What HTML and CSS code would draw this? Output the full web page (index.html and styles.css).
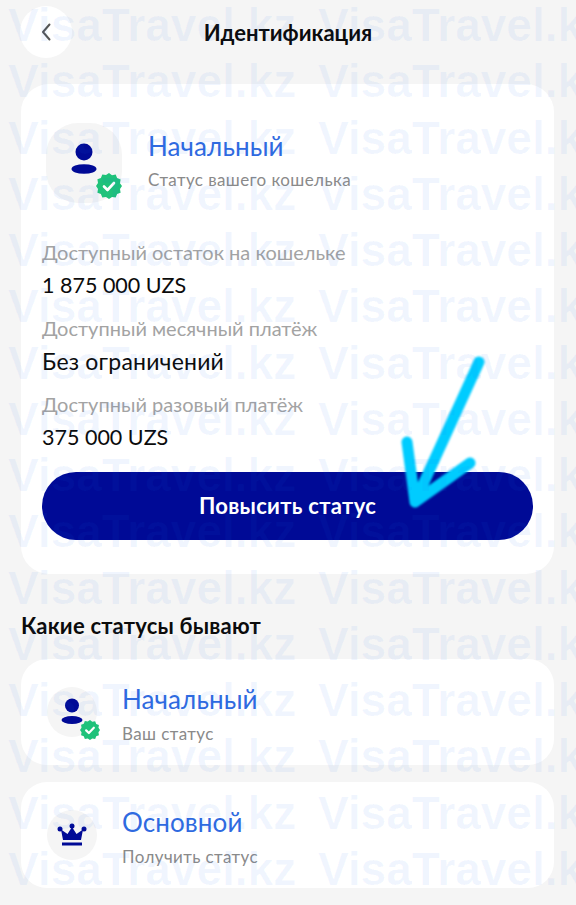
FILE: index.html
```html
<!DOCTYPE html>
<html lang="ru">
<head>
    <meta charset="UTF-8">
    <meta name="viewport" content="width=device-width, initial-scale=1.0">
    <title>Идентификация</title>
    <link rel="stylesheet" href="styles.css">
</head>
<body>
    <div class="page">
        <header class="topbar">
            <a href="#" class="back-button">
                <svg width="12" height="20" viewBox="0 0 12 20"><path d="M9.500 2.500 3 10l6.500 7.500" fill="none" stroke="#555" stroke-width="2" stroke-linecap="round" stroke-linejoin="round"/></svg>
            </a>
            <h1>Идентификация</h1>
        </header>

        <section class="card wallet">
            <div class="wallet-head">
                <div class="wallet-icon">
                    <svg class="person" width="26" height="34" viewBox="0 0 26 34"><circle cx="13" cy="9" r="8.5" fill="#000a96"/><ellipse cx="13" cy="26" rx="12.5" ry="4.8" fill="#000a96"/></svg>
                    <svg class="badge" width="26" height="26" viewBox="0 0 26 26"><path d="M13 0l3 2.2 3.7-.6 1.4 3.5 3.5 1.4-.6 3.7L26 13l-2 3 .6 3.7-3.5 1.4-1.4 3.5-3.7-.6L13 26l-3-2-3.7.6-1.4-3.5-3.5-1.4.6-3.7L0 13l2-3-.6-3.700 3.500-1.400 1.400-3.500 3.700.6z" fill="#1fc27a"/><path d="M8 13.5l3.5 3.5L18 10" fill="none" stroke="#fff" stroke-width="2.6" stroke-linecap="round" stroke-linejoin="round"/></svg>
                </div>
                <div class="wallet-text">
                    <div class="status-name big">Начальный</div>
                    <div class="status-note">Статус вашего кошелька</div>
                </div>
            </div>

            <div class="limit-label first">Доступный остаток на кошельке</div>
            <div class="limit-value">1 875 000 UZS</div>
            <div class="limit-label">Доступный месячный платёж</div>
            <div class="limit-value wide">Без ограничений</div>
            <div class="limit-label">Доступный разовый платёж</div>
            <div class="limit-value">375 000 UZS</div>

            <a href="#" class="raise-button">Повысить статус</a>
        </section>

        <h2>Какие статусы бывают</h2>

        <section class="card status-row">
            <div class="round-icon">
                <svg width="22" height="28" viewBox="0 0 22 28"><circle cx="11" cy="7.5" r="7" fill="#000a96"/><ellipse cx="11" cy="22" rx="10.5" ry="4" fill="#000a96"/></svg>
                <svg class="badge small" width="20" height="20" viewBox="0 0 26 26"><path d="M13 0l3 2.2 3.7-.6 1.4 3.5 3.5 1.4-.6 3.7L26 13l-2 3 .6 3.7-3.5 1.4-1.4 3.5-3.7-.6L13 26l-3-2-3.7.6-1.4-3.5-3.5-1.4.6-3.7L0 13l2-3-.6-3.700 3.500-1.400 1.400-3.500 3.700.6z" fill="#1fc27a"/><path d="M8 13.5l3.5 3.5L18 10" fill="none" stroke="#fff" stroke-width="2.8" stroke-linecap="round" stroke-linejoin="round"/></svg>
            </div>
            <div class="status-text">
                <div class="status-name">Начальный</div>
                <div class="status-note">Ваш статус</div>
            </div>
        </section>

        <section class="card status-row second">
            <div class="round-icon">
                <svg width="30" height="24" viewBox="0 0 30 24"><path d="M15 4l4.500 7L26 6.500 24 17H6L4 6.500 10.500 11z" fill="#000a96"/><circle cx="15" cy="3" r="2.500" fill="#000a96"/><circle cx="3" cy="6" r="2.500" fill="#000a96"/><circle cx="27" cy="6" r="2.500" fill="#000a96"/><rect x="5" y="19.500" width="20" height="3" fill="#000a96"/></svg>
            </div>
            <div class="status-text">
                <div class="status-name">Основной</div>
                <div class="status-note">Получить статус</div>
            </div>
        </section>

        <svg class="arrow" width="110" height="170" viewBox="0 0 110 170"><path d="M89 12 25 152M17 92l8 60 55-39" fill="none" stroke="#00ccff" stroke-width="11" stroke-linecap="round" stroke-linejoin="round"/></svg>

        <div class="watermark">
            <div>VisaTravel.kz VisaTravel.kz VisaTravel.kz</div>
            <div>VisaTravel.kz VisaTravel.kz VisaTravel.kz</div>
            <div>VisaTravel.kz VisaTravel.kz VisaTravel.kz</div>
            <div>VisaTravel.kz VisaTravel.kz VisaTravel.kz</div>
            <div>VisaTravel.kz VisaTravel.kz VisaTravel.kz</div>
            <div>VisaTravel.kz VisaTravel.kz VisaTravel.kz</div>
            <div>VisaTravel.kz VisaTravel.kz VisaTravel.kz</div>
            <div>VisaTravel.kz VisaTravel.kz VisaTravel.kz</div>
            <div>VisaTravel.kz VisaTravel.kz VisaTravel.kz</div>
            <div>VisaTravel.kz VisaTravel.kz VisaTravel.kz</div>
            <div>VisaTravel.kz VisaTravel.kz VisaTravel.kz</div>
            <div>VisaTravel.kz VisaTravel.kz VisaTravel.kz</div>
            <div>VisaTravel.kz VisaTravel.kz VisaTravel.kz</div>
            <div>VisaTravel.kz VisaTravel.kz VisaTravel.kz</div>
            <div>VisaTravel.kz VisaTravel.kz VisaTravel.kz</div>
            <div>VisaTravel.kz VisaTravel.kz VisaTravel.kz</div>
            <div>VisaTravel.kz VisaTravel.kz VisaTravel.kz</div>
        </div>
    </div>
</body>
</html>
```

FILE: styles.css
```css
body {
    font-family: 'Lato', 'Noto Sans', sans-serif;
    background-color: #f5f5f5;
    margin: 0;
    padding: 0;
}
.page {
    position: relative;
    width: 576px;
    height: 905px;
    overflow: hidden;
}
.topbar {
    display: grid;
    grid-template-columns: 52px 1fr 52px;
    align-items: center;
    padding: 6px 20px 26px;
}
.back-button {
    width: 52px;
    height: 52px;
    border-radius: 50%;
    background-color: #fff;
    display: flex;
    align-items: center;
    justify-content: center;
}
h1 {
    margin: 0;
    font-size: 22px;
    font-weight: 700;
    color: #0b0b0b;
    text-align: center;
}
.card {
    background-color: #fff;
    margin: 0 22px 0 21px;
}
.wallet {
    height: 490px;
    box-sizing: border-box;
    padding: 39px 21px 0;
    border-radius: 28px;
}
.wallet-head {
    display: flex;
    align-items: center;
    gap: 26px;
    margin-left: 4px;
}
.wallet-text {
    padding-bottom: 7px;
}
.wallet-icon {
    position: relative;
    width: 76px;
    height: 80px;
    border-radius: 32px;
    background-color: #f5f5f5;
    flex: none;
    display: flex;
    align-items: center;
    justify-content: center;
}
.person {
    margin-bottom: 6px;
}
.badge {
    position: absolute;
    right: 0;
    bottom: 4px;
}
.badge.small {
    right: -3px;
    bottom: -3px;
}
.status-name {
    font-size: 26px;
    line-height: 32px;
    letter-spacing: 0.1px;
    color: #2f6ae0;
}
.status-note {
    font-size: 17px;
    line-height: 20px;
    letter-spacing: 0.4px;
    color: #8a8a8a;
    margin-top: 8px;
}
.limit-label {
    font-size: 20px;
    line-height: 24px;
    color: #a3a3a3;
    margin-top: 17px;
}
.limit-label.first {
    margin-top: 37px;
}
.limit-value {
    font-size: 21.500px;
    line-height: 28px;
    color: #0b0b0b;
    margin-top: 7px;
}
.limit-value.wide {
    font-size: 23px;
    letter-spacing: 0.2px;
}
.raise-button {
    display: block;
    margin-top: 21px;
    height: 68px;
    line-height: 68px;
    border-radius: 34px;
    background-color: #000a96;
    color: #fff;
    font-size: 22px;
    letter-spacing: 0.3px;
    font-weight: 700;
    text-align: center;
    text-decoration: none;
}
h2 {
    margin: 38px 0 19px 21px;
    font-size: 22px;
    line-height: 28px;
    letter-spacing: 0.2px;
    font-weight: 700;
    color: #0b0b0b;
}
.status-row {
    height: 106px;
    box-sizing: border-box;
    padding-left: 26px;
    border-radius: 26px;
    display: flex;
    align-items: center;
    gap: 25px;
}
.status-row.second {
    margin-top: 17px;
}
.status-text {
    padding-top: 2px;
}
.status-row .status-note {
    margin-top: 9px;
}
.round-icon {
    position: relative;
    width: 50px;
    height: 50px;
    border-radius: 50%;
    background-color: #f5f5f5;
    flex: none;
    display: flex;
    align-items: center;
    justify-content: center;
}
.arrow {
    position: absolute;
    left: 390px;
    top: 350px;
    filter: blur(1px);
}
.watermark {
    position: absolute;
    top: -3px;
    left: 8px;
    font-family: 'Liberation Sans', Arial, sans-serif;
    font-size: 46px;
    line-height: 56.27px;
    font-weight: 700;
    color: rgba(30, 110, 240, 0.06);
    white-space: nowrap;
    word-spacing: 9px;
    pointer-events: none;
}
```
